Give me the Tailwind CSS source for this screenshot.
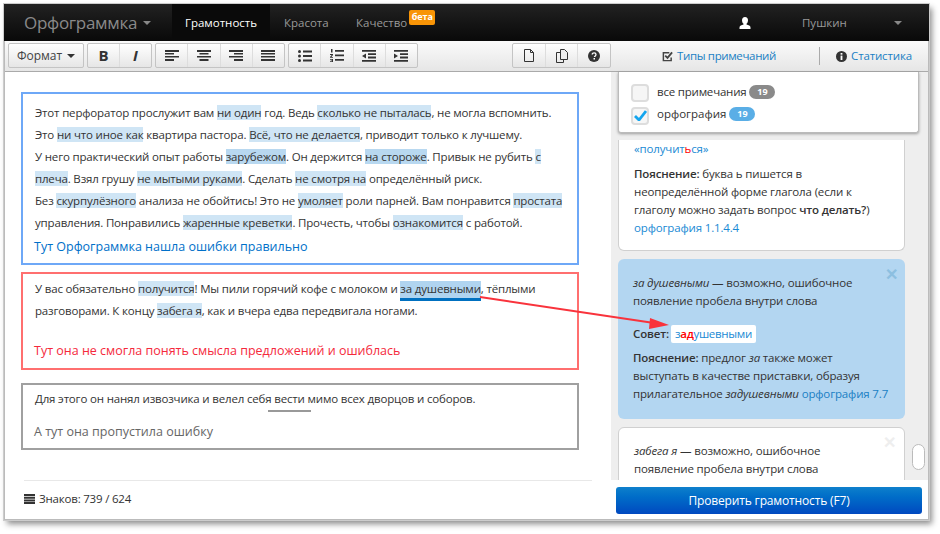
<!DOCTYPE html>
<html lang="ru">
<head>
<meta charset="utf-8">
<script src="https://cdn.jsdelivr.net/npm/@tailwindcss/browser@4"></script>
</head>
<body class="bg-white font-['Open_Sans','Noto_Sans',sans-serif] text-[11.5px] text-[#333] overflow-hidden">
<div class="relative w-[940px] h-[534px] overflow-hidden pt-[4px] pl-[4px]">
  <div class="relative w-[925px] h-[516px] flex flex-col bg-white shadow-[3px_4px_6px_rgba(0,0,0,0.45)] border-x border-b border-[#bbb] outline outline-[#ccc]">
    <!-- navbar -->
    <div class="h-[37px] -mx-px shrink-0 flex items-stretch bg-gradient-to-b from-[#222] to-[#090909] text-[#999]">
      <div class="w-[168px] pl-[20px] flex items-center gap-[6px] text-[#8a8a8a] text-[17px] tracking-[-0.3px]">Орфограммка<span class="w-0 h-0 border-x-[4px] border-x-transparent border-t-[4px] border-t-[#888]"></span></div>
      <div class="w-[98px] flex items-center justify-center bg-[#0a0a0a] text-white">Грамотность</div>
      <div class="w-[86px] flex items-center pl-[14px]">Красота</div>
      <div class="flex items-center relative">
        <span>Качество</span>
        <span class="ml-[2px] mb-[11px] h-[15px] w-[26px] rounded-[2px] bg-[#f89406] text-white text-[9px] font-bold flex items-center justify-center">бета</span>
      </div>
      <div class="flex-1"></div>
      <div class="flex items-center w-[62px]">
        <svg class="w-[12px] h-[12px]" viewBox="0 0 12 12"><path d="M6 0c2 0 3 1.300 3 3.200 0 1.500-.7 3-1.500 3.500v.8c2 .6 4 1 4 3V12H.5v-1.500c0-2 2-2.400 4-3v-.8C3.700 6.200 3 4.700 3 3.200 3 1.300 4 0 6 0z" fill="#fff"/></svg>
      </div>
      <div class="flex items-center w-[93px] pl-[1px]">Пушкин</div>
      <div class="flex items-center w-[35px]"><span class="w-0 h-0 border-x-[4px] border-x-transparent border-t-[4px] border-t-[#888]"></span></div>
    </div>
    <!-- toolbar -->
    <div class="h-[31px] shrink-0 flex bg-gradient-to-b from-[#fafafa] to-[#e6e6e6] border-b border-[#aaa]">
      <div class="w-[606px] shrink-0 flex items-start pt-[2px] pl-[3px] gap-[3px]">
        <div class="h-[25px] w-[76px] rounded-[2px] border border-[#c4c4c4] bg-gradient-to-b from-white to-[#e6e6e6] flex items-center justify-center gap-[5px] text-[#444] text-[12px]">Формат<span class="w-0 h-0 border-x-[4px] border-x-transparent border-t-[4px] border-t-[#333]"></span></div>
        <div class="h-[25px] w-[65px] rounded-[2px] border border-[#c4c4c4] bg-gradient-to-b from-white to-[#e6e6e6] flex items-center">
          <div class="flex-1 h-full flex items-center justify-center text-[15px] font-bold text-[#333] border-r border-[#ddd]">B</div>
          <div class="flex-1 h-full flex items-center justify-center text-[15px] font-bold italic text-[#333]">I</div>
        </div>
        <div class="h-[25px] w-[130px] rounded-[2px] border border-[#c4c4c4] bg-gradient-to-b from-white to-[#e6e6e6] flex items-center">
          <div class="flex-1 h-full flex items-center justify-center border-r border-[#ddd]"><svg class="w-[14px] h-[11px]" viewBox="0 0 14 11" fill="#333"><path d="M0 0h14v2H0zM0 3h9v1.500H0zM0 6h14v1.500H0zM0 9h9v2H0z"/></svg></div>
          <div class="flex-1 h-full flex items-center justify-center border-r border-[#ddd]"><svg class="w-[14px] h-[11px]" viewBox="0 0 14 11" fill="#333"><path d="M0 0h14v2H0zM2.500 3h9v1.500h-9zM0 6h14v1.500H0zM2.500 9h9v2h-9z"/></svg></div>
          <div class="flex-1 h-full flex items-center justify-center border-r border-[#ddd]"><svg class="w-[14px] h-[11px]" viewBox="0 0 14 11" fill="#333"><path d="M0 0h14v2H0zM5 3h9v1.500H5zM0 6h14v1.500H0zM5 9h9v2H5z"/></svg></div>
          <div class="flex-1 h-full flex items-center justify-center"><svg class="w-[14px] h-[11px]" viewBox="0 0 14 11" fill="#333"><path d="M0 0h14v2H0zM0 3h14v1.500H0zM0 6h14v1.500H0zM0 9h14v2H0z"/></svg></div>
        </div>
        <div class="h-[25px] w-[130px] rounded-[2px] border border-[#c4c4c4] bg-gradient-to-b from-white to-[#e6e6e6] flex items-center">
          <div class="flex-1 h-full flex items-center justify-center border-r border-[#ddd]"><svg class="w-[14px] h-[12px]" viewBox="0 0 14 12" fill="#333"><circle cx="1.500" cy="1.500" r="1.500"/><circle cx="1.500" cy="6" r="1.500"/><circle cx="1.500" cy="10.500" r="1.500"/><path d="M5 .5h9v2H5zM5 5h9v2H5zM5 9.500h9v2H5z"/></svg></div>
          <div class="flex-1 h-full flex items-center justify-center border-r border-[#ddd]"><svg class="w-[14px] h-[13px]" viewBox="0 0 14 13" fill="#333"><path d="M1 0h1.500v3.500H1zM0 5h3v1L1.500 8H3v.7H0v-.8L1.700 6H0zM0 10h3v3H0v-.7h2v-.5H.7v-.6H2v-.5H0zM5 1h9v1.800H5zM5 5.500h9v1.800H5zM5 10h9v1.800H5z"/></svg></div>
          <div class="flex-1 h-full flex items-center justify-center border-r border-[#ddd]"><svg class="w-[14px] h-[12px]" viewBox="0 0 14 12" fill="#333"><path d="M0 0h14v1.800H0zM6 3.200h8V5H6zM6 6.600h8v1.800H6zM0 10h14v1.800H0zM4 3.500v5L0 6z"/></svg></div>
          <div class="flex-1 h-full flex items-center justify-center"><svg class="w-[14px] h-[12px]" viewBox="0 0 14 12" fill="#333"><path d="M0 0h14v1.800H0zM6 3.200h8V5H6zM6 6.600h8v1.800H6zM0 10h14v1.800H0zM0 3.500v5L4 6z"/></svg></div>
        </div>
        <div class="ml-auto h-[25px] w-[99px] rounded-[2px] border border-[#c4c4c4] bg-gradient-to-b from-white to-[#e6e6e6] flex items-center">
          <div class="flex-1 h-full flex items-center justify-center border-r border-[#ddd]"><svg class="w-[10px] h-[13px]" viewBox="0 0 10 13" fill="none" stroke="#333"><path d="M.5.500h6l3 3v9h-9z"/><path d="M6.500.5v3h3"/></svg></div>
          <div class="flex-1 h-full flex items-center justify-center border-r border-[#ddd]"><svg class="w-[12px] h-[14px]" viewBox="0 0 12 14" fill="none" stroke="#333"><path d="M4.500.5h4l3 3v7h-7z" fill="#eee"/><path d="M4.500 3.500h-4v10h7v-3"/></svg></div>
          <div class="flex-1 h-full flex items-center justify-center"><svg class="w-[12px] h-[12px]" viewBox="0 0 12 12"><circle cx="6" cy="6" r="6" fill="#333"/><path d="M4.200 4.600c0-2.200 3.800-2.200 3.800 0 0 1.300-1.500 1.300-1.500 2.500" fill="none" stroke="#fff" stroke-width="1.300"/><rect x="5.500" y="8" width="1.500" height="1.500" fill="#fff"/></svg></div>
        </div>
      </div>
      <div class="flex-1 flex items-center text-[#1a7fc4]">
        <div class="w-[208px] flex items-center justify-center gap-[4px] pl-[8px] tracking-[-0.35px]"><svg class="w-[11px] h-[11px]" viewBox="0 0 12 12" fill="none" stroke="#444" stroke-width="1.600"><path d="M10 7v3.500H1.500V2H8"/><path d="M3.500 5l2.500 2.500 5-6" stroke-width="2"/></svg>Типы примечаний</div>
        <div class="w-px h-[18px] bg-[#aaa]"></div>
        <div class="flex-1 flex items-center justify-center gap-[4px] tracking-[-0.15px]"><svg class="w-[11px] h-[11px]" viewBox="0 0 12 12"><circle cx="6" cy="6" r="6" fill="#333"/><rect x="5" y="2.200" width="2" height="1.800" fill="#fff"/><rect x="5" y="5" width="2" height="4.800" fill="#fff"/></svg>Статистика</div>
      </div>
    </div>
    <!-- body -->
    <div class="flex-1 flex min-h-0">
      <div class="w-[606px] shrink-0 flex flex-col">
        <div class="flex-1 pl-[16px] pt-[20px]">
          <div class="w-[558px] h-[173px] border-2 border-[#6ea8f7] pl-[12px] pt-[8px] leading-[22px] whitespace-nowrap tracking-[-0.17px]">
            <div>Этот перфоратор прослужит вам <mark class="bg-[#cfe5f5] text-inherit">ни один</mark> год. Ведь <mark class="bg-[#cfe5f5] text-inherit">сколько не пыталась</mark>, не могла вспомнить.</div>
            <div>Это <mark class="bg-[#cfe5f5] text-inherit">ни что иное как</mark> квартира пастора. <mark class="bg-[#cfe5f5] text-inherit">Всё, что не делается</mark>, приводит только к лучшему.</div>
            <div>У него практический опыт работы <mark class="bg-[#b8d8f0] text-inherit">зарубежом</mark>. Он держится <mark class="bg-[#b8d8f0] text-inherit">на стороже</mark>. Привык не рубить <mark class="bg-[#cfe5f5] text-inherit">с</mark></div>
            <div><mark class="bg-[#cfe5f5] text-inherit">плеча</mark>. Взял грушу <mark class="bg-[#cfe5f5] text-inherit">не мытыми руками</mark>. Сделать <mark class="bg-[#cfe5f5] text-inherit">не смотря на</mark> определённый риск.</div>
            <div>Без <mark class="bg-[#cfe5f5] text-inherit">скурпулёзного</mark> анализа не обойтись! Это не <mark class="bg-[#cfe5f5] text-inherit">умоляет</mark> роли парней. Вам понравится <mark class="bg-[#cfe5f5] text-inherit">простата</mark></div>
            <div>управления. Понравились <mark class="bg-[#cfe5f5] text-inherit">жаренные креветки</mark>. Прочесть, чтобы <mark class="bg-[#cfe5f5] text-inherit">ознакомится</mark> с работой.</div>
            <div class="text-[12.5px] text-[#0070c9] leading-[26px] -ml-[1px] tracking-normal">Тут Орфограммка нашла ошибки правильно</div>
          </div>
          <div class="mt-[7px] w-[558px] h-[98px] border-2 border-[#ff6f6f] pl-[12px] pt-[4px] leading-[22px] whitespace-nowrap tracking-[-0.17px]">
            <div>У вас обязательно <mark class="bg-[#cfe5f5] text-inherit">получится</mark>! Мы пили горячий кофе с молоком и <mark class="bg-[#b0d4f0] text-inherit border-b-[3px] border-[#0070c0] pb-[2px]">за душевными</mark>, тёплыми</div>
            <div>разговорами. К концу <mark class="bg-[#cfe5f5] text-inherit">забега я</mark>, как и вчера едва передвигала ногами.</div>
            <div class="mt-[17px] text-[12.5px] text-[#f5293c] leading-[24px] -ml-[1px] tracking-normal">Тут она не смогла понять смысла предложений и ошиблась</div>
          </div>
          <div class="mt-[13px] w-[558px] h-[67px] border-2 border-[#a0a0a0] pl-[12px] pt-[3px] leading-[22px] whitespace-nowrap tracking-[-0.17px]">
            <div>Для этого он нанял извозчика и велел себя <span class="relative">вести<span class="absolute -left-[6px] -right-[6px] top-[19px] h-[2px] bg-[#999]"></span></span> мимо всех дворцов и соборов.</div>
            <div class="mt-[10px] text-[12.5px] text-[#666] leading-[24px] -ml-[1px] tracking-normal">А тут она пропустила ошибку</div>
          </div>
        </div>
        <div class="mx-[19px] h-[39px] border-t border-[#e8e8e8] flex items-center gap-[4px] pb-[3px] shrink-0">
          <svg class="w-[11px] h-[10px]" viewBox="0 0 11 10" fill="#333"><path d="M0 0h11v2H0zM0 2.700h11v2H0zM0 5.400h11v2H0zM0 8h11v2H0z"/></svg>
          <span class="tracking-[-0.2px]">Знаков: 739 / 624</span>
        </div>
      </div>
      <div class="flex-1 flex flex-col min-w-0">
        <div class="h-[408px] shrink-0 bg-[#eee] relative overflow-hidden pl-[7px] text-[#333] leading-[18px] tracking-[-0.15px]">
          <div class="mt-[68px] w-[287px] h-[111px] rounded-b-[6px] bg-white border-x border-b border-[#d0d0d0] pl-[15px] whitespace-nowrap">
            <div class="text-[#1a8ad4]">«получит<b class="text-[#f00] font-normal">ь</b>ся»</div>
            <div class="mt-[7px]"><b class="font-semibold">Пояснение:</b> буква ь пишется в</div>
            <div>неопределённой форме глагола (если к</div>
            <div>глаголу можно задать вопрос <b class="font-semibold">что делать?</b>)</div>
            <div class="text-[#1a8ad4]">орфография 1.1.4.4</div>
          </div>
          <div class="relative mt-[8px] w-[287px] h-[160px] rounded-[6px] bg-[#b3d6f1] pl-[15px] pt-[15px] whitespace-nowrap">
            <span class="absolute right-[7px] top-[6px] text-[16px] font-bold text-[#8dbfe0]">✕</span>
            <div><i>за душевными</i> — возможно, ошибочное</div>
            <div>появление пробела внутри слова</div>
            <div class="mt-[13px] flex items-center gap-[2px] h-[22px]"><b class="font-semibold">Совет:</b><span class="bg-white rounded-[2px] px-[4px] text-[#1a8ad4] h-[18px] tracking-[-0.3px]">з<b class="text-[#f00] font-semibold">ад</b>ушевными</span></div>
            <div class="mt-[4px]"><b class="font-semibold">Пояснение:</b> предлог <i>за</i> также может</div>
            <div>выступать в качестве приставки, образуя</div>
            <div>прилагательное <i>задушевными</i> <span class="text-[#1a7fc4]">орфография 7.7</span></div>
          </div>
          <div class="relative mt-[8px] w-[287px] h-[90px] rounded-[6px] bg-white border border-[#d0d0d0] pl-[15px] pt-[14px] whitespace-nowrap">
            <span class="absolute right-[8px] top-[5px] text-[16px] font-bold text-[#eee]">✕</span>
            <div><i>забега я</i> — возможно, ошибочное</div>
            <div>появление пробела внутри слова</div>
          </div>
          <div class="absolute left-[301px] top-[372px] w-[13px] h-[26px] rounded-[7px] bg-white border border-[#bbb]"></div>
        </div>
        <div class="flex-1 bg-white pl-[5px] pt-[7px]">
          <div class="w-[306px] h-[27px] rounded-[3px] bg-gradient-to-b from-[#0f80cc] to-[#0048c0] text-white text-[12px] tracking-[-0.15px] flex items-center justify-center">Проверить грамотность (F7)</div>
        </div>
      </div>
    </div>
    <!-- dropdown -->
    <div class="absolute left-[613px] top-[68px] w-[301px] h-[61px] bg-white rounded-b-[3px] border border-t-0 border-[#bbb] shadow-[0_1px_3px_rgba(0,0,0,0.35)] pl-[12px] pt-[9px]">
      <div class="flex items-center h-[22px] gap-[8px]">
        <span class="w-[18px] h-[18px] mt-[2px] rounded-[4px] border-2 border-[#ddd] bg-[#f6f6f6]"></span>
        <span class="tracking-[-0.2px]">все примечания</span>
        <span class="-ml-[5px] h-[14px] w-[26px] rounded-full bg-[#8a8a8a] text-white text-[9px] font-bold flex items-center justify-center">19</span>
      </div>
      <div class="flex items-center h-[22px] gap-[8px]">
        <span class="w-[18px] h-[18px] mt-[3px] rounded-[4px] border-2 border-[#ddd] bg-[#f6f6f6] flex items-center justify-center"><svg class="w-[13px] h-[11px]" viewBox="0 0 13 11"><path d="M1 6l4 4 7-9" fill="none" stroke="#14a5ee" stroke-width="2.800"/></svg></span>
        <span>орфография</span>
        <span class="-ml-[5px] h-[14px] w-[26px] rounded-full bg-[#5aaee6] text-white text-[9px] font-bold flex items-center justify-center">19</span>
      </div>
    </div>
  </div>
  <!-- arrow -->
  <svg class="absolute left-0 top-0 pointer-events-none" width="940" height="534" viewBox="0 0 940 534"><path d="M480 297L654 323" stroke="#f9333c" stroke-width="2" fill="none"/><path d="M669 325L650 318L649 329z" fill="#f9333c"/></svg>
</div>
</body>
</html>
